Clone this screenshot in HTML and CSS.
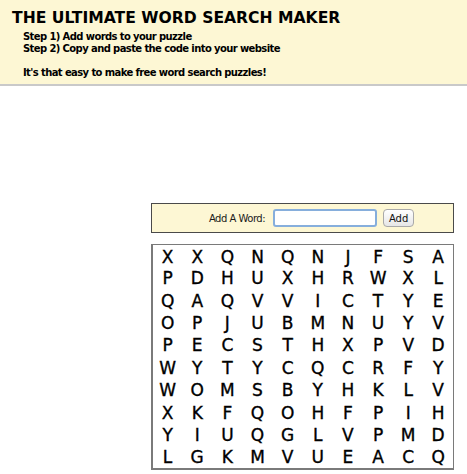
FILE: index.html
```html
<!DOCTYPE html>
<html lang="en">
<head>
  <meta charset="UTF-8">
  <meta name="viewport" content="width=device-width, initial-scale=1.0">
  <title>The Ultimate Word Search Maker</title>
  <link rel="stylesheet" href="styles.css">
</head>
<body>
  <div class="header">
    <h1>THE ULTIMATE WORD SEARCH MAKER</h1>
    <div class="steps">
      <p>Step 1) Add words to your puzzle</p>
      <p>Step 2) Copy and paste the code into your website</p>
      <p class="gap">It's that easy to make free word search puzzles!</p>
    </div>
  </div>

  <div class="maker">
    <form class="add-box" onsubmit="return false;">
      <label for="word">Add A Word:</label>
      <input type="text" id="word" class="word-input">
      <button class="btn">Add</button>
    </form>

    <table class="puzzle">
      <tbody id="grid">
        <tr><td>X</td><td>X</td><td>Q</td><td>N</td><td>Q</td><td>N</td><td>J</td><td>F</td><td>S</td><td>A</td></tr>
        <tr><td>P</td><td>D</td><td>H</td><td>U</td><td>X</td><td>H</td><td>R</td><td>W</td><td>X</td><td>L</td></tr>
        <tr><td>Q</td><td>A</td><td>Q</td><td>V</td><td>V</td><td>I</td><td>C</td><td>T</td><td>Y</td><td>E</td></tr>
        <tr><td>O</td><td>P</td><td>J</td><td>U</td><td>B</td><td>M</td><td>N</td><td>U</td><td>Y</td><td>V</td></tr>
        <tr><td>P</td><td>E</td><td>C</td><td>S</td><td>T</td><td>H</td><td>X</td><td>P</td><td>V</td><td>D</td></tr>
        <tr><td>W</td><td>Y</td><td>T</td><td>Y</td><td>C</td><td>Q</td><td>C</td><td>R</td><td>F</td><td>Y</td></tr>
        <tr><td>W</td><td>O</td><td>M</td><td>S</td><td>B</td><td>Y</td><td>H</td><td>K</td><td>L</td><td>V</td></tr>
        <tr><td>X</td><td>K</td><td>F</td><td>Q</td><td>O</td><td>H</td><td>F</td><td>P</td><td>I</td><td>H</td></tr>
        <tr><td>Y</td><td>I</td><td>U</td><td>Q</td><td>G</td><td>L</td><td>V</td><td>P</td><td>M</td><td>D</td></tr>
        <tr><td>L</td><td>G</td><td>K</td><td>M</td><td>V</td><td>U</td><td>E</td><td>A</td><td>C</td><td>Q</td></tr>
      </tbody>
    </table>
  </div>
</body>
</html>
```

FILE: styles.css
```css
/* Reset and Global Styles */
* {
  margin: 0;
  padding: 0;
  box-sizing: border-box;
}
body {
  font-family: "DejaVu Sans", Verdana, sans-serif;
  background-color: #fff;
  color: #000;
}

/* Header */
.header {
  height: 86px;
  background: #fdf7d4;
  border-bottom: 2px solid #c9c9c9;
  padding: 9px 0 0 12px;
}
h1 {
  font-size: 15.6px;
  font-weight: bold;
  line-height: 18px;
}
.steps {
  padding: 4px 0 0 11px;
  font-size: 10px;
  font-weight: bold;
  line-height: 12px;
  letter-spacing: -0.6px;
}
.steps .gap {
  margin-top: 12px;
}

/* Maker area */
.maker {
  margin: 117px 0 0 151px;
  width: 303px;
}

/* Add word form */
.add-box {
  display: flex;
  align-items: center;
  justify-content: center;
  height: 30px;
  background: #fdf7d4;
  border: 1px solid #4a4a4a;
  padding-left: 18px;
}
.add-box label {
  font-size: 10px;
  letter-spacing: -0.5px;
  color: #1a1a1a;
  margin-right: 8px;
}
.word-input {
  width: 104px;
  height: 18px;
  border: 2px solid #86aedc;
  border-radius: 3px;
  background: #fff;
  margin-right: 6px;
}
.btn {
  font-family: "DejaVu Sans", Verdana, sans-serif;
  font-size: 10px;
  width: 31px;
  height: 18px;
  border: 1px solid #a9a9a9;
  border-radius: 4px;
  background: linear-gradient(#ffffff, #e6e6e6);
  color: #111;
  cursor: pointer;
}

/* Puzzle grid */
.puzzle {
  width: 100%;
  margin-top: 11px;
  border-collapse: collapse;
  border: 2px solid #7a7a7a;
  border-top-width: 1px;
  border-right-width: 1px;
}
.puzzle td {
  width: 10%;
  height: 22.4px;
  text-align: center;
  font-size: 17px;
  line-height: 20px;
  padding: 0;
  -webkit-text-stroke: 0.35px #000;
}
.puzzle tr:first-child td {
  padding-top: 2px;
}
```
